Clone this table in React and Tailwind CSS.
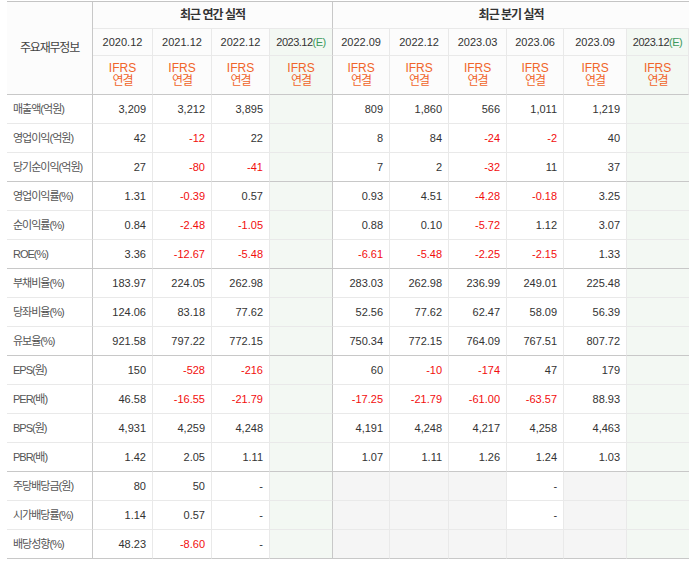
const annualYears = ['2020.12', '2021.12', '2022.12'];
const quarterYears = ['2022.09', '2022.12', '2023.03', '2023.06', '2023.09'];

const rows = [
  { label: '매출액(억원)', a: ['3,209', '3,212', '3,895'], q: ['809', '1,860', '566', '1,011', '1,219'] },
  { label: '영업이익(억원)', a: ['42', '-12', '22'], q: ['8', '84', '-24', '-2', '40'] },
  { label: '당기순이익(억원)', a: ['27', '-80', '-41'], q: ['7', '2', '-32', '11', '37'], end: true },
  { label: '영업이익률(%)', a: ['1.31', '-0.39', '0.57'], q: ['0.93', '4.51', '-4.28', '-0.18', '3.25'] },
  { label: '순이익률(%)', a: ['0.84', '-2.48', '-1.05'], q: ['0.88', '0.10', '-5.72', '1.12', '3.07'] },
  { label: 'ROE(%)', a: ['3.36', '-12.67', '-5.48'], q: ['-6.61', '-5.48', '-2.25', '-2.15', '1.33'], end: true },
  { label: '부채비율(%)', a: ['183.97', '224.05', '262.98'], q: ['283.03', '262.98', '236.99', '249.01', '225.48'] },
  { label: '당좌비율(%)', a: ['124.06', '83.18', '77.62'], q: ['52.56', '77.62', '62.47', '58.09', '56.39'] },
  { label: '유보율(%)', a: ['921.58', '797.22', '772.15'], q: ['750.34', '772.15', '764.09', '767.51', '807.72'], end: true },
  { label: 'EPS(원)', a: ['150', '-528', '-216'], q: ['60', '-10', '-174', '47', '179'] },
  { label: 'PER(배)', a: ['46.58', '-16.55', '-21.79'], q: ['-17.25', '-21.79', '-61.00', '-63.57', '88.93'] },
  { label: 'BPS(원)', a: ['4,931', '4,259', '4,248'], q: ['4,191', '4,248', '4,217', '4,258', '4,463'] },
  { label: 'PBR(배)', a: ['1.42', '2.05', '1.11'], q: ['1.07', '1.11', '1.26', '1.24', '1.03'], end: true },
  { label: '주당배당금(원)', a: ['80', '50', '-'], q: [null, null, null, '-', null] },
  { label: '시가배당률(%)', a: ['1.14', '0.57', '-'], q: [null, null, null, '-', null] },
  { label: '배당성향(%)', a: ['48.23', '-8.60', '-'], q: [null, null, null, null, null], end: true },
];

const font = "font-['Liberation_Sans','Noto_Sans_CJK_KR',sans-serif]";

const Num = ({ v, last, end }) => {
  const neg = v && v.startsWith('-') && v !== '-';
  return (
    <td
      className={`h-[29px] pr-[6px] text-right text-[11px] border-b border-r ${
        end ? 'border-b-[#c8c8c8]' : 'border-b-[#e9e9e9]'
      } ${last ? 'border-r-[#c8c8c8]' : 'border-r-[#e9e9e9]'} ${
        v === null ? 'bg-[#f5f5f5]' : 'bg-white'
      } ${neg ? 'text-[#f20d0d]' : 'text-[#333]'}`}
    >
      {v}
    </td>
  );
};

const Est = ({ end, last }) => (
  <td
    className={`h-[29px] bg-[#f3f8f3] border-b border-r ${end ? 'border-b-[#c8c8c8]' : 'border-b-[#e9e9e9]'} ${
      last ? 'border-r-[#c8c8c8]' : 'border-r-transparent'
    }`}
  ></td>
);

const YearCell = ({ y, est, last }) => (
  <th
    className={`h-[27px] font-normal text-[11px] text-[#333] border-b border-r border-b-[#e9e9e9] ${
      last ? 'border-r-[#c8c8c8]' : 'border-r-[#e9e9e9]'
    } ${est ? 'bg-[#f3f8f3] tracking-[-0.5px]' : 'bg-[#fcfcfc]'}`}
  >
    {y}
    {est && <span className="text-[#3d9a5c]">(E)</span>}
  </th>
);

const IfrsCell = ({ est, last }) => (
  <th
    className={`h-[39px] font-normal text-[12px] leading-[13px] text-[#f0652a] border-b border-r border-b-[#c8c8c8] ${
      last ? 'border-r-[#c8c8c8]' : 'border-r-[#e9e9e9]'
    } ${est ? 'bg-[#f3f8f3]' : 'bg-[#fcfcfc]'}`}
  >
    IFRS
    <br />
    <span className="tracking-[-1px]">연결</span>
  </th>
);

export default function App() {
  return (
    <div className={`bg-white w-[691px] h-[563px] pl-[7px] pt-px ${font}`}>
      <table className="table-fixed border-separate border-spacing-0 w-[682px] border-t border-t-[#c4c4c4]">
        <colgroup>
          <col className="w-[86px]" />
          <col className="w-[60px]" />
          <col className="w-[59px]" />
          <col className="w-[58px]" />
          <col className="w-[63px]" />
          <col className="w-[57px]" />
          <col className="w-[59px]" />
          <col className="w-[58px]" />
          <col className="w-[57px]" />
          <col className="w-[63px]" />
          <col className="w-[62px]" />
        </colgroup>
        <thead>
          <tr>
            <th
              rowSpan={3}
              className="bg-[#fcfcfc] font-normal text-[12px] text-[#444] tracking-[-1.2px] border-b border-r border-b-[#c8c8c8] border-r-[#c8c8c8]"
            >
              주요재무정보
            </th>
            <th
              colSpan={4}
              className="h-[27px] bg-[#fcfcfc] font-bold text-[12px] text-[#333] tracking-[-1px] border-b border-r border-b-[#e9e9e9] border-r-[#c8c8c8]"
            >
              최근 연간 실적
            </th>
            <th
              colSpan={6}
              className="h-[27px] bg-[#fcfcfc] font-bold text-[12px] text-[#333] tracking-[-1px] border-b border-b-[#e9e9e9]"
            >
              최근 분기 실적
            </th>
          </tr>
          <tr>
            {annualYears.map((y) => (
              <YearCell key={y} y={y} />
            ))}
            <YearCell y="2023.12" est last />
            {quarterYears.map((y) => (
              <YearCell key={'q' + y} y={y} />
            ))}
            <YearCell y="2023.12" est />
          </tr>
          <tr>
            {[0, 1, 2].map((i) => (
              <IfrsCell key={i} />
            ))}
            <IfrsCell est last />
            {[0, 1, 2, 3, 4].map((i) => (
              <IfrsCell key={'q' + i} />
            ))}
            <IfrsCell est />
          </tr>
        </thead>
        <tbody>
          {rows.map((r) => (
            <tr key={r.label}>
              <td
                className={`h-[29px] pl-[6px] text-left text-[11px] text-[#555] tracking-[-1px] border-b border-r border-r-[#c8c8c8] ${
                  r.end ? 'border-b-[#c8c8c8]' : 'border-b-[#e9e9e9]'
                }`}
              >
                {r.label}
              </td>
              {r.a.map((v, i) => (
                <Num key={i} v={v} end={r.end} />
              ))}
              <Est end={r.end} last />
              {r.q.map((v, i) => (
                <Num key={'q' + i} v={v} end={r.end} />
              ))}
              <td
                className={`h-[29px] bg-[#f3f8f3] border-b ${r.end ? 'border-b-[#c8c8c8]' : 'border-b-[#e9e9e9]'}`}
              ></td>
            </tr>
          ))}
        </tbody>
      </table>
    </div>
  );
}
